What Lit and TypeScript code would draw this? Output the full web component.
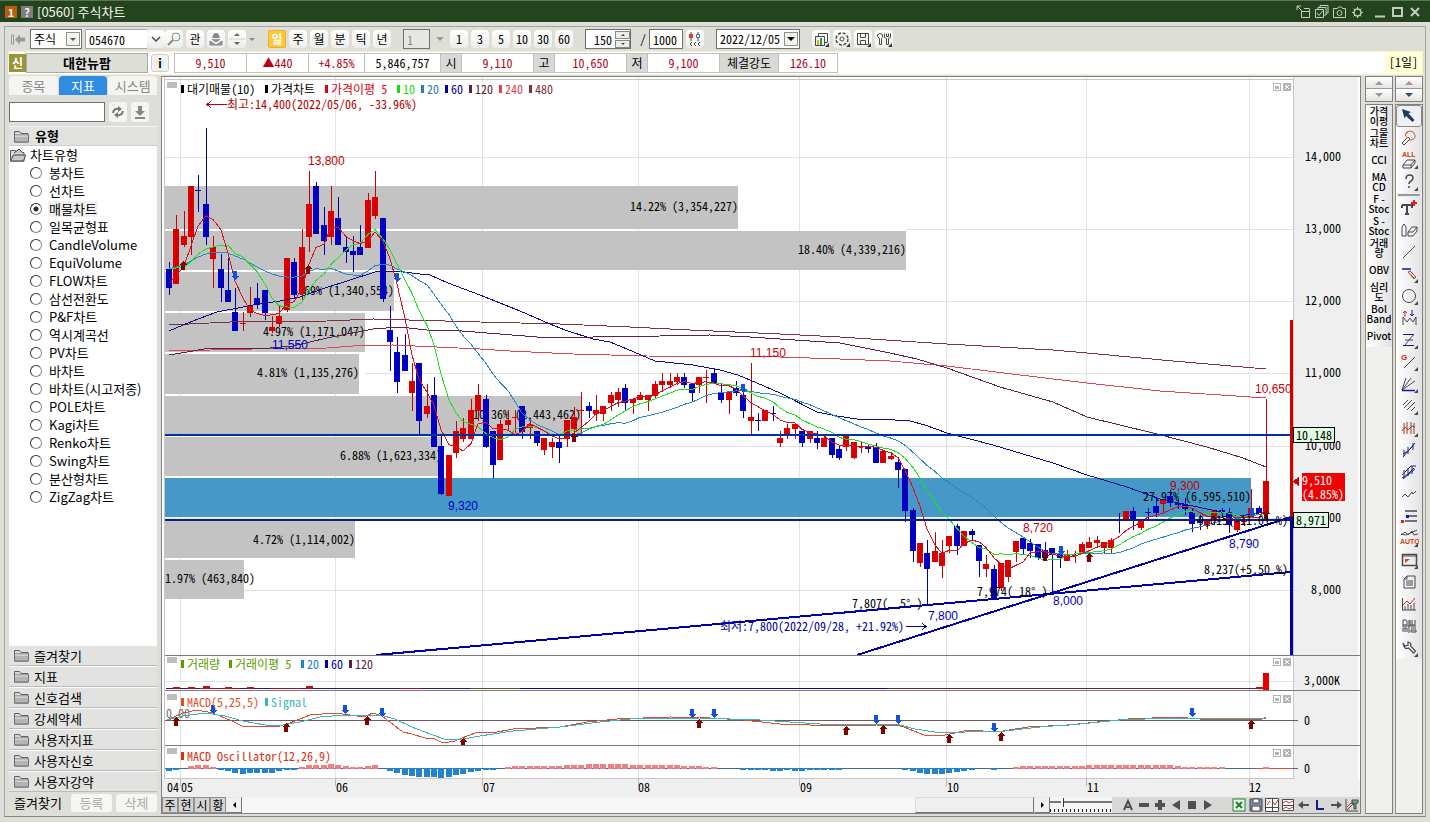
import { LitElement, html, svg, css } from "lit";
import { customElement, property } from "lit/decorators.js";
import { classMap } from "lit/directives/class-map.js";

type Pt = [number, number];

/* ---------- chart data ---------- */

// colour, body top, body bottom, wick top, wick bottom
const CANDLES: [string, number, number, number, number][] = (
  "b269,288,262,295 r229,284,215,284 r236,245,211,247 r186,237,186,255 b190,191,175,212 b204,237,128,245 r247,259,236,288 " +
  "b269,288,254,302 b290,302,258,302 b312,331,288,331 r323,324,312,331 r306,313,287,317 b298,305,283,309 b290,313,290,320 " +
  "r327,331,316,333 r316,324,306,327 r258,310,258,312 b262,295,258,298 r247,294,229,302 r204,237,171,252 b186,234,182,234 " +
  "b225,241,207,255 r211,237,186,245 b218,245,197,245 b247,252,236,263 b251,255,236,272 b247,255,225,255 r200,248,193,248 " +
  "r197,216,171,219 b218,299,218,302 b330,342,306,371 b352,382,337,393 b355,371,334,371 r381,393,363,411 b363,421,363,435 " +
  "r406,414,384,418 b395,447,377,447 b446,494,435,495 r455,496,455,496 r431,453,421,458 r428,439,418,442 r410,439,399,439 " +
  "r395,411,384,421 b399,447,395,448 b431,465,431,478 r424,460,420,460 r420,425,410,430 r417,418,410,433 b406,432,406,439 " +
  "r424,428,420,439 b431,443,431,446 r438,450,438,455 r442,447,438,458 b442,448,436,463 r420,439,420,447 r417,429,407,435 " +
  "r410,411,392,435 b406,411,402,418 r410,414,395,421 r406,414,406,421 r395,403,392,411 r392,400,388,407 b388,403,384,411 " +
  "r399,403,399,414 r395,400,392,400 r395,400,395,411 r384,396,381,399 r381,385,373,392 r381,385,373,388 r377,382,373,385 " +
  "b377,385,373,388 b384,393,384,402 r377,385,377,393 r377,378,370,403 b373,383,369,383 b392,400,384,403 r392,400,392,414 " +
  "b388,393,381,396 b395,411,392,418 r417,421,363,435 b420,421,413,431 r410,421,410,421 b413,414,406,421 r438,443,431,447 " +
  "r428,435,424,439 r424,429,423,439 b431,443,431,447 r431,439,431,443 b438,443,431,449 r438,447,436,447 b438,455,438,458 " +
  "b449,458,445,460 r436,447,436,451 r442,458,442,459 r446,447,442,453 b446,449,445,453 b447,463,443,463 r451,463,451,463 " +
  "r456,459,452,460 b462,470,457,488 b469,511,469,522 b510,551,508,562 r543,563,543,567 b553,569,540,605 r551,562,532,562 " +
  "r553,566,540,578 r536,546,536,553 b526,546,524,555 r531,546,531,546 b531,535,529,541 b545,561,545,577 r564,569,555,577 " +
  "b569,598,565,598 r563,588,563,591 r560,577,560,582 r541,552,541,562 b538,549,538,554 b543,551,539,558 b544,558,544,560 " +
  "b550,558,542,560 b548,555,548,592 b553,558,553,568 r555,561,550,561 r555,556,551,563 r544,554,542,554 r542,548,537,548 " +
  "r540,543,536,548 r542,548,542,553 r540,548,538,553 b519,520,513,533 r511,519,511,519 b511,519,507,530 r521,528,519,530 " +
  "b512,513,508,519 b506,513,498,517 r500,504,500,513 b496,503,490,507 b503,505,500,509 b504,509,498,515 b512,524,509,532 " +
  "b520,523,515,530 r520,526,520,529 r511,519,510,525 b510,512,508,518 b512,525,508,533 r521,530,521,532 r519,522,517,526 " +
  "r508,517,489,517 b508,513,506,513 r481,513,399,513"
)
  .split(" ")
  .map((s) => {
    const [a, b, c, d] = s.slice(1).split(",").map(Number);
    return [s[0], a, b, c, d];
  });

const cx = (i: number) => Math.round(169 + (i * 1097) / 149);
const closes = CANDLES.map((c) => (c[0] === "r" ? c[1] : c[2]));

function average(n: number, lead: number[]): Pt[] {
  return closes.map((_, i) => {
    if (i < n - 1) return [cx(i), lead[i]] as Pt;
    const part = closes.slice(i - n + 1, i + 1);
    return [cx(i), part.reduce((a, b) => a + b, 0) / n] as Pt;
  });
}

const MA5 = average(5, [283, 276, 266, 246]);
const MA10 = average(10, [269, 268, 267, 262, 254, 249, 247, 245, 245]);
const MA20 = average(20, [269, 267, 265, 261, 257, 254, 252, 252, 253, 256, 259, 263, 267, 271, 274, 276, 277, 277, 276]);

const parse = (s: string): Pt[] => s.split(" ").map((p) => p.split(",").map(Number) as Pt);
const MA60 = parse(
  "169,331 183,325 198,319 217,312 238,308 258,304 280,301 300,297 325,288 350,280 375,272 395,271 420,274 430,275 448,283 480,295 520,311 550,324 565,330 593,339 610,342 627,349 655,361 693,365 720,370 738,375 757,383 780,393 817,412 837,416 857,419 880,419 910,421 925,425 947,433 993,445 1053,463 1087,475 1127,487 1160,499 1193,506 1240,516 1266,512"
);
const MA120 = parse(
  "169,355 187,352 210,348 270,348 293,346 327,338 373,329 400,327 427,330 450,330 487,333 537,337 593,337 660,336 710,335 750,337 780,339 840,343 890,353 917,359 947,368 1000,387 1053,402 1087,417 1153,433 1207,447 1243,458 1266,467"
);
const MA240 = parse(
  "169,351 253,349 327,348 353,346 393,345 480,349 510,351 573,354 647,356 780,357 840,359 890,361 947,366 1053,379 1087,383 1160,391 1266,398"
);
const MA480 = parse(
  "169,325 230,322 327,321 373,319 480,322 560,324 630,327 690,330 780,334 840,337 947,344 1053,350 1087,353 1173,361 1266,369"
);
const MACD = parse(
  "167,720 183,713 197,710 213,713 232,721 242,726 265,726 280,726 290,723 300,719 310,715 335,713 350,715 363,717 373,713 382,716 395,726 403,732 412,734 425,738 433,738 443,743 455,741 467,736 478,732 492,733 513,729 560,727 587,722 617,719 670,717 710,718 743,720 780,724 840,726 877,725 897,725 904,727 924,735 945,735 969,730 997,732 1028,727 1069,725 1097,722 1128,719 1176,717 1200,719 1262,719 1266,718"
);
const SIGNAL = parse(
  "167,720 183,716 205,713 225,716 243,721 265,725 283,725 300,722 320,717 345,715 363,716 380,715 395,719 412,727 430,734 447,740 463,739 480,736 513,731 560,727 600,722 630,719 700,718 760,720 820,724 880,724 900,725 915,729 935,732 955,733 975,731 1005,731 1040,727 1080,724 1120,720 1170,718 1262,719 1266,717"
);

// signed height of each oscillator bar
const OSC: number[] = [
  -2, -1, 0, 2, 3, 3, 1, -1, -2, -4, -5, -4, -4, -4, -4, -2, -1, -1, 1, 3, 3, 3, 4, 3, 2, 1, 1, 2, 3, 0,
  -2, -4, -6, -7, -8, -8, -8, -9, -8, -6, -5, -3, -2, -1, -1, 0, 1, 2, 2, 2, 2, 2, 2, 2, 3, 3, 3, 4, 4, 4,
  4, 4, 4, 3, 3, 3, 3, 3, 3, 3, 2, 2, 2, 1, 1, 0, 0, 0, -1, -1, -1, -1, -2, -2, -1, -2, -2, -1, -1, -1,
  -1, -1, 0, 0, 0, 0, 0, 0, 0, 0, -1, -2, -4, -5, -5, -5, -4, -3, -2, -1, 0, 0, -1, 0, 0, 1, 2, 2, 2, 2,
  2, 2, 2, 2, 2, 3, 3, 3, 3, 3, 3, 3, 3, 3, 3, 3, 3, 2, 1, 1, 1, 1, 1, 1, 0, 0, 0, 0, 0, 1,
];

// top, bottom, right edge, label
const PROFILE: [number, number, number, string][] = [
  [186, 229, 738, "14.22% (3,354,227)"],
  [231, 270, 906, "18.40% (4,339,216)"],
  [272, 311, 394, "5.69% (1,340,554)"],
  [313, 352, 365, "4.97% (1,171,047)"],
  [354, 394, 359, "4.81% (1,135,276)"],
  [396, 435, 581, "10.36% (2,443,462)"],
  [437, 476, 442, "6.88% (1,623,334)"],
  [478, 517, 1251, "27.97% (6,595,510)"],
  [521, 558, 355, "4.72% (1,114,002)"],
  [560, 599, 244, "1.97% (463,840)"],
];

const GRID_X = [180, 335, 482, 638, 799, 946, 1086, 1249];
const GRID_Y = [157, 229, 301, 373, 446, 518, 590];
const RED = "#dc0000";
const BLUE = "#0000c8";

const line = (p: Pt[], color: string) =>
  svg`<polyline points=${p.map((q) => q.join(",")).join(" ")} fill="none" stroke=${color} stroke-width="1"></polyline>`;
const txt = (x: number, y: number, s: string, color = "#000", cls = "m", anchor = "start") =>
  svg`<text x=${x} y=${y + 5} class=${cls} fill=${color} text-anchor=${anchor} xml:space="preserve">${s}</text>`;
const up = (x: number, y: number) =>
  svg`<path d="M${x} ${y - 5}l4 4h-2v5h-4v-5h-2z" fill="#800000"></path>`;
const down = (x: number, y: number) =>
  svg`<path d="M${x} ${y + 5}l4 -4h-2v-5h-4v5h-2z" fill="#1450e0"></path>`;

const cells = (s: string) => [...s].reduce((a, c) => a + (c > "\u1000" ? 12 : 6), 0);
function legend(y: number, items: [string, string][]) {
  let x = 181;
  return items.map(([s, color]) => {
    const at = x;
    x += 12 + cells(s);
    return svg`<rect x=${at} y=${y - 4} width="3" height="8" fill=${color}></rect>${txt(at + 6, y, s, color)}`;
  });
}
const paneTools = (y: number) => svg`
  <rect x="167" y=${y - 5} width="10" height="6" fill="#bdbdbd"></rect>
  <rect x="1273.5" y=${y - 3.5} width="7" height="7" fill="#fff" stroke="#b4b4b4"></rect>
  <rect x="1275" y=${y - 1} width="4" height="3" fill="#b4b4b4"></rect>
  <rect x="1283" y=${y - 4} width="8" height="8" fill="#b4b4b4"></rect>
  <path d="M1285 ${y - 2}l4 4m0 -4l-4 4" stroke="#fff"></path>`;
const paneBase = (y0: number, y1: number) => svg`
  <rect x="162" y=${y0} width="1198" height=${y1 - y0} fill="#fff"></rect>
  <rect x="1293" y=${y0} width="65" height=${y1 - y0} fill="#efefef"></rect>
  ${GRID_X.map((x) => svg`<path d="M${x + 0.5} ${y0}V${y1}" stroke="#e2e2e2"></path>`)}
  <path d="M164.5 ${y0}V${y1}M1293.5 ${y0}V${y1}" stroke="#c6c6c6"></path>`;
const paneEdge = (y: number) => svg`<path d="M165 ${y + 0.5}H1360" stroke="#7a7a7a"></path>`;

@customElement("stock-chart")
class StockChart extends LitElement {
  static styles = css`
    :host { display: block; }
    svg { display: block; width: 100%; shape-rendering: crispEdges; }
    svg.months { overflow: visible; }
    .m { font: 12px "Noto Sans Mono CJK KR", "Noto Sans CJK KR", "Liberation Mono", monospace; white-space: pre; }
    .p { font: 12px "Liberation Sans", sans-serif; }
  `;

  render() {
    return html`${this.price()}${this.volume()}${this.macd()}${this.oscillator()}${this.months()}`;
  }

  price() {
    return html`<svg viewBox="162 77 1198 578" role="img" aria-label="가격차트">
      ${paneBase(77, 655)}
      <path d="M165 79.5H1293" stroke="#c6c6c6"></path>
      ${PROFILE.map(
        ([a, b, x], i) => svg`<rect x="165" y=${a} width=${x - 165} height=${b - a} fill=${i === 7 ? "#4698c6" : "#c3c3c3"}></rect>`
      )}
      <path d="M165 518.5H1251" stroke="#d4f0f4"></path>
      ${GRID_Y.map((y, i) =>
        i === 0 || i === 3 || i === 6
          ? svg`<path d="M${i === 3 ? 365 : i === 6 ? 244 : 165} ${y + 0.5}H1298" stroke="#e0e0e0"></path>`
          : svg`<path d="M${[0, 906, 394, 0, 442, 1251][i]} ${y + 0.5}H1298" stroke="#e0e0e0"></path>`
      )}
      ${PROFILE.map(([a, , x, s]) => txt(x < 260 ? 165 : x, a < 190 ? 206 : a + 18, s, "#000", "m", x < 260 ? "start" : "end"))}
      ${CANDLES.map(([c, a, b, h, l], i) => {
        const color = c === "r" ? RED : BLUE;
        return svg`<rect x=${cx(i) - 3} y=${a} width="6" height=${b - a} fill=${color}></rect>
          <rect x=${cx(i)} y=${h} width="1" height=${l - h} fill=${c === "r" ? "#c80000" : "#0000a0"}></rect>`;
      })}
      ${line(MA480, "#80303c")}${line(MA240, "#dc4656")}${line(MA120, "#602048")}${line(MA60, "#0a0a96")}
      ${line(MA20, "#2a86c4")}${line(MA10, "#1ee01e")}${line(MA5, "#dc1020")}
      <path d="M165 435H1291" stroke="#0030a8" stroke-width="2"></path>
      <path d="M165 520H1291" stroke="#101c88" stroke-width="2"></path>
      <path d="M376 655L1291 572M857 655L1291 517" stroke="#0000a8" stroke-width="2"></path>
      <rect x="1290" y="320" width="3" height="198" fill="#d00000"></rect>
      <rect x="1290" y="517" width="3" height="138" fill="#0000a8"></rect>
      ${[[183, 266], [308, 270], [574, 438], [1045, 557], [1089, 558], [1266, 515]].map(([x, y]) => up(x, y))}
      ${[[235, 275], [397, 277], [743, 388], [1061, 550], [1252, 512]].map(([x, y]) => down(x, y))}
      ${txt(308, 160, "13,800", "#c80000", "p")}${txt(272, 344, "11,550", "#0000c8", "p")}
      ${txt(448, 505, "9,320", "#0000c8", "p")}${txt(750, 352, "11,150", "#c80000", "p")}
      ${txt(1023, 527, "8,720", "#c80000", "p")}${txt(1170, 485, "9,300", "#c80000", "p")}
      ${txt(928, 615, "7,800", "#0000c8", "p")}${txt(1053, 600, "8,000", "#0000c8", "p")}
      ${txt(1229, 543, "8,790", "#0000c8", "p")}${txt(1255, 388, "10,650", "#c80000", "p")}
      ${txt(852, 603, "7,807(  5° )")}${txt(977, 591, "7,974( 18° )")}
      ${txt(1204, 569, "8,237(+5.50 %)")}${txt(1198, 520, "9,015(-11.01 %)")}
      <path d="M207 104.5H227M211 101l-4 3.5l4 3.5" stroke="#b40000" fill="none"></path>
      ${txt(227, 104, "최고:14,400(2022/05/06, -33.96%)", "#b40000")}
      ${txt(720, 626, "최저:7,800(2022/09/28, +21.92%)", "#0000a0")}
      <path d="M906 626.5H926M922 623l4 3.5l-4 3.5" stroke="#0000a0" fill="none"></path>
      ${legend(89, [
        ["대기매물(10)", "#000"],
        ["가격차트", "#000"],
        ["가격이평 5", "#dc0010"],
        ["10", "#14dc14"],
        ["20", "#2080c0"],
        ["60", "#0000a0"],
        ["120", "#602040"],
        ["240", "#e04050"],
        ["480", "#803038"],
      ])}
      ${paneTools(87)}
      ${["14,000", "13,000", "12,000", "11,000", "10,000", "9,000", "8,000"].map((s, i) =>
        txt(1341, GRID_Y[i] - 1, s, "#000", "m", "end")
      )}
      <rect x="1293.5" y="427.5" width="41" height="15" fill="#e1ffe1" stroke="#000"></rect>
      ${txt(1296, 435, "10,148")}
      <rect x="1293.5" y="512.5" width="35" height="15" fill="#e1ffe1" stroke="#000"></rect>
      ${txt(1296, 520, "8,971")}
      <rect x="1302" y="473" width="43" height="28" fill="#f00000"></rect>
      <path d="M1293 481.5l6 -5v10z" fill="#c80000"></path>
      ${txt(1302, 480, "9,510", "#fff")}${txt(1302, 494, "(4.85%)", "#fff")}
    </svg>`;
  }

  volume() {
    const small: Record<number, number> = { 1: 1, 3: 1, 5: 2, 8: 1, 11: 1, 19: 2, 148: 1 };
    return html`<svg viewBox="162 655 1198 36" role="img" aria-label="거래량">
      ${paneBase(655, 691)}${paneEdge(655)}${paneEdge(690)}
      <path d="M165 681.5H1298" stroke="#e2e2e2"></path>
      <path d="M166 688.5H470" stroke="#2a1478" stroke-width="1"></path>
      <path d="M200 688.5H240M270 688.5H300M400 688.5H420" stroke="#a01030"></path>
      <path d="M470 688.5H520" stroke="#605020"></path>
      <path d="M520 688.5H887" stroke="#200080"></path>
      <path d="M887 688.5H1262" stroke="#502848"></path>
      ${Object.entries(small).map(([i, h]) => svg`<rect x=${cx(+i) - 3} y=${688 - h} width="7" height=${h + 1} fill="#c01010"></rect>`)}
      <rect x="1263" y="673" width="6" height="17" fill="#e60000"></rect>
      ${legend(664, [
        ["거래량", "#5a9a00"],
        ["거래이평 5", "#5a9a00"],
        ["20", "#2080d0"],
        ["60", "#0000a0"],
        ["120", "#602040"],
      ])}
      ${paneTools(662)}${txt(1304, 680, "3,000K")}
    </svg>`;
  }

  macd() {
    return html`<svg viewBox="162 691 1198 54" role="img" aria-label="MACD">
      ${paneBase(691, 745)}
      ${txt(166, 713, "0.00", "#707070")}
      <path d="M165 720.5H1298" stroke="#705860"></path>
      ${line(MACD, "#dc5030")}${line(SIGNAL, "#3cb4bc")}
      ${[[213, 709], [345, 709], [382, 712], [692, 713], [714, 713], [876, 719], [898, 719], [994, 727], [1192, 712]].map(([x, y]) => down(x, y))}
      ${[[176, 722], [286, 728], [367, 721], [463, 743], [699, 724], [846, 731], [883, 730], [949, 739], [1001, 737], [1251, 725]].map(([x, y]) => up(x, y))}
      ${legend(702, [
        ["MACD(5,25,5)", "#e05028"],
        ["Signal", "#3cb4bc"],
      ])}
      ${paneTools(699)}${txt(1304, 720, "0")}
    </svg>`;
  }

  oscillator() {
    return html`<svg viewBox="162 745 1198 34" role="img" aria-label="MACD Oscillator">
      ${paneBase(745, 779)}${paneEdge(745)}
      <path d="M165 768.5H1298" stroke="#3c6c9c"></path>
      <path d="M1256 768.5H1293" stroke="#e05030"></path>
      ${OSC.map((h, i) =>
        h
          ? svg`<rect x=${cx(i) - 3} y=${h > 0 ? 768 - h : 768} width="6" height=${Math.abs(h) + 1} fill=${h > 0 ? "#f08080" : "#2382cd"}></rect>`
          : null
      )}
      ${legend(756, [["MACD Oscillator(12,26,9)", "#d83010"]])}
      ${paneTools(753)}${txt(1304, 768, "0")}
      <path d="M165 778.5H1293" stroke="#c6c6c6"></path>
    </svg>`;
  }

  months() {
    const labels: [number, string][] = [
      [167, "04"], [181, "05"], [336, "06"], [483, "07"], [638, "08"], [800, "09"], [947, "10"], [1087, "11"], [1249, "12"],
    ];
    return html`<svg class="months" viewBox="162 779 1198 18" role="img" aria-label="월">
      <rect x="162" y="779" width="1196" height="18" fill="#efefef"></rect>
      ${GRID_X.map((x) => svg`<path d="M${x + 0.5} 779V786" stroke="#b8b8b8"></path>`)}
      ${labels.map(([x, s]) => txt(x, 787, s))}
    </svg>`;
  }
}

/* ---------- icons ---------- */

const K = "#484848";
const svgIcon = (body: unknown, w = 20, h = 20) =>
  html`<svg width=${w} height=${h} viewBox="0 0 ${w} ${h}" fill="none" stroke=${K} stroke-width="1" aria-hidden="true">${body}</svg>`;
const corner = svg`<path d="M19 15v4h-4z" fill=${K} stroke="none"></path>`;

const DRAW_TOOLS: [string, unknown, boolean][] = [
  ["선택", svg`<path d="M3 3l9 3-2.500 1.500 6 6.500-2 2-6.500-6-1.500 2.500z" fill="#1c3c60" stroke="none"></path>`, false],
  ["되돌리기", svg`<path d="M3 15l6-6 2 2-6 6z"></path><path d="M9 4l-3 3 3 3M6 7q1-4 5-4t5 4-4 5h-2" stroke="#d86030"></path>`, false],
  ["전체 지우기", svg`<text x="3" y="7" font-size="7" font-weight="bold" font-family="Liberation Sans" fill="#d03c10" stroke="none">ALL</text><path d="M4 15l4-5h8l-4 5zM4 15v3h8l4-5v-3M12 15v3"></path>`, true],
  ["도움말", svg`<path d="M7 7q0-4 3.500-4t3.500 3q0 2-2 3t-2 3M10 14v2" stroke-width="1.500"></path>`, true],
  ["문자", svg`<path d="M3 7h10v3M8 7v9M6 16h4M3 7v3" stroke-width="2"></path><path d="M15 2v6M12 5h6" stroke="#e02020" stroke-width="2"></path>`, false],
  ["지우개", svg`<path d="M3 7v9h4V7l-2-3zM9 12l4-5h5l-4 5zM9 12v4h5l4-5V7"></path>`, false],
  ["추세선", svg`<path d="M4 16L16 4"></path>`, false],
  ["수평선", svg`<path d="M3 5h9" stroke="#1010b0" stroke-width="1.500"></path><path d="M9 8l2-1 6 6-2 2z" stroke="#c83030"></path><path d="M12 11l4 4" stroke="#208040"></path>`, true],
  ["원", svg`<circle cx="10" cy="10" r="6.500"></circle>`, true],
  ["파동", svg`<path d="M4 17V9l4 5 3-4 3 4 3-5v8"></path><path d="M6 9V3M4 5l2-2 2 2" stroke="#e02020"></path><path d="M13 2v6M11 6l2 2 2-2" stroke="#1010c0"></path>`, false],
  ["Z형", svg`<path d="M15 4L6 15M6 10h8"></path><path d="M4 4.500h11M4 15.500h11" stroke="#1010b0"></path>`, true],
  ["각도선", svg`<text x="2" y="8" font-size="8" font-weight="bold" font-family="Liberation Sans" fill="#d02000" stroke="none">G</text><path d="M5 16L16 5"></path>`, true],
  ["팬", svg`<path d="M3 16L7 4M3 16L12 4M3 16L16 7"></path><path d="M3 16.500h13" stroke="#1010c0" stroke-width="1.500"></path>`, true],
  ["평행선", svg`<path d="M4 9l5-5M5 12l8-8M8 14l8-8M12 15l4-4"></path>`, true],
  ["시간대", svg`<path d="M5 5v11M8 4v12M12 4v12M15 5v11M3 13l3-4 3 3 4-4 3 1" stroke="#984020"></path>`, true],
  ["파동 1", svg`<path d="M4 17L16 3M5 10v6M9 7v7M14 3v7M4 14l5-3 5-5" stroke="#202090"></path>`, false],
  ["파동 2", svg`<path d="M3 13L12 4h5M4 17L16 7M5 8v8M9 6v8M13 4v8M3 16l6-4 6-6" stroke="#202090"></path>`, false],
  ["지그재그", svg`<path d="M3 13l3-3 3 3 4-5 1 2 3-3"></path>`, false],
  ["수준선", svg`<path d="M6 5h12M9 10h9M6 15h12" stroke-width="1.500"></path><rect x="7" y="9" width="3" height="3" fill="#1010c0" stroke="none"></rect><rect x="2" y="14" width="3" height="3" fill="#e02010" stroke="none"></rect>`, false],
  ["자동 추세", svg`<path d="M2 6l5 1 11-5M2 7l4-3 3 3 4-4 2 4 4-1"></path><text x="1" y="16" font-size="7" font-weight="bold" font-family="Liberation Sans" fill="#d84010" stroke="none">AUTO</text>`, true],
  ["창", svg`<path d="M3.500 4.500h14v11h-14z" stroke-width="1.500"></path><path d="M3 6h14"></path><path d="M6 9h5l-5 4z" fill="#d84010" stroke="none"></path>`, true],
  ["문서", svg`<path d="M8 4h8v12H5V7zM8 4v3H5M7 9h7M7 11h7M7 13h7"></path>`, false],
  ["차트", svg`<path d="M3.500 4v12M3 16h14M6 12v4M9 10v6M12 11v5M15 9v7"></path><path d="M4 11l4-4 3 3 5-6" stroke="#e02020"></path>`, false],
  ["일주월", svg`<path d="M4 4v5h4V5L7 4zM11 4v5h5V4M13 4v5M3 10h14M10 4v13M4 16v-4h4v4M6 12v4M12 12h5M12 14h5v2h-5z"></path>`, false],
  ["설정", svg`<path d="M4 5l2 3 3-1v-3q4 1 2.500 4l5 5-2 2-5-5Q5 12 4 5z" stroke-width="1.200"></path>`, true],
];

const folder = (open = false) => html`<svg width="17" height="15" viewBox="0 0 17 15" aria-hidden="true">
  <path d="M1.500 13V2.500h5l1.500 2h7V13z" fill="#d8d8d8" stroke="#606060"></path>
  ${open
    ? svg`<path d="M1.500 13l3-6h12l-2 6zM5 5l5-4 4 4" fill="#c8c8c8" stroke="#404040"></path>`
    : svg`<path d="M1.500 13V6h14v7z" fill="#b4b4b4" stroke="#707070"></path><path d="M2 7h13" stroke="#eee"></path>`}
</svg>`;
const tri = (dir: "up" | "down" | "left" | "right", color = "#606060", s = 4) => {
  const d = {
    up: `M0 ${s}l${s} -${s}l${s} ${s}z`,
    down: `M0 0h${2 * s}l-${s} ${s}z`,
    left: `M${s} 0v${2 * s}l-${s} -${s}z`,
    right: `M0 0v${2 * s}l${s} -${s}z`,
  }[dir];
  const flat = dir === "up" || dir === "down";
  return html`<svg width=${flat ? 2 * s : s} height=${flat ? s : 2 * s} aria-hidden="true"><path d=${d} fill=${color}></path></svg>`;
};

const CHART_TYPES = [
  "봉차트", "선차트", "매물차트", "일목균형표", "CandleVolume", "EquiVolume", "FLOW차트", "삼선전환도", "P&F차트", "역시계곡선",
  "PV차트", "바차트", "바차트(시고저종)", "POLE차트", "Kagi차트", "Renko차트", "Swing차트", "분산형차트", "ZigZag차트",
];
const QUICK = ["가격\n이평", "그물\n차트", "CCI", "MA\nCD", "F -\nStoc", "S -\nStoc", "거래\n량", "OBV", "심리\n도", "Bol\nBand", "Pivot"];
const QUOTE: [string, string][] = [
  ["9,510", "r w72"], ["▲440", "r w62"], ["+4.85%", "r w56"], ["5,846,757", "w76"],
  ["시", "h w22"], ["9,110", "r w72"], ["고", "h w22"], ["10,650", "r w72"],
  ["저", "h w22"], ["9,100", "r w72"], ["체결강도", "h w60"], ["126.10", "r w60"],
];

@customElement("app-root")
class AppRoot extends LitElement {
  @property() picked = "매물차트";

  static styles = css`
    :host { display: block; font: 12px/16px "Noto Sans CJK KR", sans-serif; color: #000; }
    * { box-sizing: border-box; }
    button, input, select { font: inherit; color: inherit; margin: 0; padding: 0; border: 0; border-radius: 0; background: none; }
    button { display: flex; align-items: center; justify-content: center; }
    svg { flex: none; }
    .window { display: flex; flex-direction: column; min-height: 100vh; background: #deded9; }
    .title { display: flex; align-items: center; gap: 4px; height: 22px; padding: 0 8px 0 5px; background: #24441e; border-top: 1px solid #5c7458; color: #f4f4f0; font-size: 13px; }
    .title h1 { font-size: 13px; font-weight: 400; margin: 0; flex: 1; }
    .badge { width: 12px; height: 12px; line-height: 12px; text-align: center; font-size: 11px; font-weight: 700; background: #b85c10; }
    .badge.help { background: #807c80; }
    .title svg { display: block; }
    .frame { flex: 1; display: flex; flex-direction: column; margin: 4px 4px 5px 4px; border: 1px solid #a4a4a0; border-bottom-color: #888; }
    .toolbar, .quote, .scroll { font-family: "Noto Sans Mono CJK KR", "Noto Sans CJK KR", "Liberation Mono", monospace; }

    .toolbar { display: flex; align-items: center; gap: 3px; height: 24px; padding-left: 4px; }
    .toolbar button { height: 18px; width: 18px; background: linear-gradient(#fff, #ededea); border-radius: 4px; }
    .toolbar button.on { background: #ffc83c; color: #fff; border: 1px solid #f0b020; border-radius: 2px; font-weight: 700; }
    .toolbar button.flat { background: none; width: 18px; }
    .toolbar .far { margin-left: 9px; }
    .box { display: flex; align-items: center; height: 20px; background: #fff; border: 1px solid #707070; position: relative; }
    .box input, .box select { appearance: none; width: 100%; height: 100%; padding-left: 3px; outline: none; background: transparent; }
    .box .arrow { position: absolute; right: 1px; top: 2px; width: 14px; height: 14px; display: grid; place-items: center; pointer-events: none; background: #f2f2ee; border: 1px solid #909090; }
    .w-kind { width: 52px; } .w-code { width: 62px; border-color: #aaa; border-right: 0; } .w-n { width: 27px; background: #e6e6e2; color: #888; }
    .w-cnt { width: 46px; } .w-max { width: 34px; } .w-date { width: 84px; }
    .w-cnt input { padding-left: 8px; }
    .pair { display: flex; align-items: center; }
    .spin { display: grid; gap: 1px; }
    .toolbar .spin button { width: 15px; height: 8px; background: #ecece8; border: 1px solid #888; border-radius: 0; }
    .periods { display: flex; gap: 3px; margin-left: 10px; }
    .icons { display: flex; gap: 3px; margin-left: 9px; }

    .quote { display: flex; align-items: center; height: 24px; margin: 0 2px 0 3px; background: #fff; border: 1px solid #f4f4c8; }
    .quote .mark { width: 17px; height: 18px; line-height: 17px; text-align: center; font-weight: 700; background: #989438; color: #fff; }
    .quote .name { width: 122px; height: 20px; background: #deded9; border: 1px solid #aaa; font-weight: 700; font-size: 13px; }
    .quote .info { width: 18px; height: 18px; margin: 0 5px 0 3px; background: #f2f2f0; border: 1px solid #ccc; border-radius: 3px; font-weight: 700; }
    .quote table { border-collapse: collapse; table-layout: fixed; }
    .quote td { height: 19px; padding: 0; border: 1px solid #c0c0c0; text-align: center; background: #fff; line-height: 16px; }
    .quote td.r { color: #b40018; } .quote td.h { background: #d8d8d6; }
    .w72 { width: 72px; } .w62 { width: 62px; } .w56 { width: 56px; } .w76 { width: 76px; } .w22 { width: 21px; } .w60 { width: 59px; }
    .quote .unit { margin-left: auto; height: 22px; line-height: 20px; padding: 0 4px; background: #ffffd8; }

    .main { flex: 1; display: flex; padding: 1px 2px 2px 4px; gap: 4px; }
    .side { width: 148px; display: flex; flex-direction: column; font-size: 13px; }
    .tabs { display: flex; gap: 1px; height: 19px; }
    .tabs button { flex: 1; background: #f4f4f2; color: #888; border-radius: 4px 4px 0 0; }
    .tabs button.on { background: #308ce0; color: #fff; }
    .search { display: flex; gap: 4px; margin-top: 7px; height: 20px; }
    .search input { width: 96px; background: #fff; border: 1px solid #707070; }
    .search button { width: 18px; background: #f4f4f2; border-radius: 3px; }
    .head { display: flex; align-items: center; gap: 5px; height: 20px; margin-top: 4px; padding-left: 4px; background: #e2e2e0; border-bottom: 1px solid #ccc; border-top: 1px solid #f4f4f4; font-weight: 700; }
    .tree { flex: 1; background: #fff; margin: 0; padding: 0; border: 0; }
    .root { display: flex; align-items: center; gap: 4px; height: 18px; }
    .tree label { display: flex; align-items: center; height: 18px; padding-left: 21px; gap: 6px; white-space: nowrap; }
    .tree label span { padding: 0 1px; line-height: 16px; }
    .tree label.on span { background: #f0f0f0; }
    .tree input { appearance: none; width: 12px; height: 12px; border: 1px solid #303030; border-right-color: #888; border-bottom-color: #888; border-radius: 50%; background: #fff; }
    .tree input:checked { background: radial-gradient(#183040 0 2px, #fff 3px); }
    .fold { justify-content: flex-start; gap: 4px; height: 21px; padding-left: 4px; background: #e2e2e0; border-top: 1px solid #fbfbfb; border-bottom: 1px solid #bbb; }
    .foot { display: flex; align-items: center; gap: 4px; height: 22px; padding-left: 5px; }
    .foot span { flex: 1; white-space: nowrap; }
    .foot button { width: 41px; height: 18px; background: #f6f6f4; color: #aaa; border-radius: 3px; }

    .center { flex: 1; min-width: 0; display: flex; flex-direction: column; border: 1px solid #808088; background: #f4f4f4; }
    .scroll { display: flex; height: 16px; align-items: stretch; background: #f6f6f6; }
    .scroll .cat { width: 16px; background: #d4d4d2; border: 1px solid #909090; }
    .scroll .step { width: 16px; background: #f0f0ee; border: 1px solid #e8e8e8; border-right-color: #777; border-bottom-color: #777; }
    .track { flex: 1; display: flex; justify-content: flex-end; }
    .thumb { width: 119px; background: #efefed; border: 1px solid #ddd; border-right-color: #777; border-bottom-color: #777; }
    .zoom { appearance: none; width: 62px; background: linear-gradient(#777, #777) 0 4px / 100% 2px no-repeat, repeating-linear-gradient(90deg, #222 0 1px, transparent 1px 4px) 0 12px / 100% 3px no-repeat; }
    .zoom::-webkit-slider-thumb { appearance: none; width: 3px; height: 9px; margin-bottom: 5px; background: #fff; border-right: 1px solid #333; }
    .strip { display: flex; width: 248px; background: #d8d8d6; align-items: center; justify-content: space-between; padding-left: 8px; }
    .strip button { width: 16px; height: 16px; }
    .strip .gap { width: 15px; }

    .rail { width: 28px; display: flex; flex-direction: column; gap: 2px; }
    .rail + .rail { margin-left: -2px; }
    .updown { border: 1px solid #808080; background: #fff; }
    .updown button { width: 100%; height: 12px; background: linear-gradient(#fff, #e4e4e2); border-bottom: 1px solid #999; }
    .updown button + button { border: 0; }
    .list { flex: 1; border: 1px solid #808080; border-left-color: #a08c84; background: #f0f0ef; }
    .list button { width: 100%; height: 22px; background: linear-gradient(90deg, #fff, #e2e2e4); }
    .quick { font-size: 10px; line-height: 10px; font-weight: 500; white-space: pre; }
    .list button.on { border: 1px solid #888; border-radius: 3px; background: #eef0f4; }
    .list hr { height: 2px; margin: 1px 2px; border: 0; background: #999; }
  `;

  render() {
    return html`<div class="window">${this.titleBar()}
      <div class="frame">${this.toolBar()}${this.quoteBar()}
        <div class="main">${this.sidebar()}
          <section class="center"><stock-chart></stock-chart>${this.scrollBar()}</section>
          <nav class="rail">
            <div class="updown"><button aria-label="위로">${tri("up", "#999")}</button><button aria-label="아래로">${tri("down", "#999")}</button></div>
            <div class="list">${QUICK.map((q) => html`<button class="quick">${q}</button>`)}</div>
          </nav>
          <nav class="rail">
            <div class="updown"><button aria-label="위로">${tri("up", "#999")}</button><button aria-label="아래로">${tri("down", "#305070")}</button></div>
            <div class="list">${DRAW_TOOLS.map(
              ([name, body, more], i) => html`<button class=${classMap({ on: i === 0 })} aria-label=${name}>${svgIcon(svg`${body}${more ? corner : null}`)}</button>${i === 3 ? html`<hr />` : null}`
            )}</div>
          </nav>
        </div>
      </div>
    </div>`;
  }

  titleBar() {
    return html`<header class="title">
      <span class="badge">1</span><span class="badge help">?</span><h1>[0560] 주식차트</h1>
      <svg width="126" height="16" viewBox="0 0 126 16" fill="none" stroke="#c4ccc0" aria-hidden="true">
        <path d="M1 2l5 5M1 2h4M1 2v4M8 4.500h5M5.500 8v5.500h8v-9M5 7.500h8"></path>
        <path d="M19.500 5.500h8v8h-8zM22 5V3.500h8V11H28M24 4V1.500h8V9H30M21 9l2 2.500 4-5"></path>
        <path d="M37.500 4.500h4l1-1.500h3l1 1.500h3v9h-12z"></path><circle cx="43.500" cy="9" r="2.500"></circle>
        <circle cx="61.500" cy="8.500" r="3.500" stroke-width="1.500"></circle><path d="M61.500 3v2M61.500 12v2M56 8.500h2M65 8.500h2M57.500 4.500l1.500 1.500M64 11l1.500 1.500M65.500 4.500L64 6M59 11l-1.500 1.500"></path>
        <path d="M79 12.500h10" stroke-width="2"></path><path d="M97 4h9v8h-9z" stroke-width="2"></path><path d="M115 4l8 8M123 4l-8 8" stroke-width="2"></path>
      </svg>
    </header>`;
  }

  toolBar() {
    return html`<div class="toolbar">
      <button class="flat" aria-label="처음으로">${svgIcon(svg`<path d="M2.500 5v9h2V5z" stroke="#999"></path><path d="M6 9.500l5-5v3h5v4h-5v3z" fill="#999" stroke="none"></path>`, 18, 18)}</button>
      <span class="box w-kind"><select aria-label="종류"><option>주식</option></select><span class="arrow">${tri("down", "#555", 3)}</span></span>
      <span class="pair"><span class="box w-code"><input aria-label="종목코드" value="054670" /></span>
        <button aria-label="목록">${svgIcon(svg`<path d="M4 6l4 4 4-4" stroke-width="1.500"></path>`, 16, 16)}</button>
        <button aria-label="검색">${svgIcon(svg`<circle cx="10" cy="6" r="4" stroke="#888"></circle><path d="M7 9l-5 5" stroke="#888" stroke-width="2"></path>`, 16, 16)}</button></span>
      <button>관</button>
      <button aria-label="관심종목">${svgIcon(svg`<path d="M5 5a3 3 0 0 1 6 0l1 2H4z" fill="#888" stroke="none"></path><path d="M4 8q4 5 8 0M2 10l6 4 6-4v4H2z" fill="#999" stroke="#888"></path>`, 16, 16)}</button>
      <button aria-label="이전 다음">${svgIcon(svg`<path d="M8 2l3 3H5zM8 14l3-3H5z" fill="#666" stroke="none"></path><path d="M0 8h16" stroke="#ccc"></path>`, 16, 16)}</button>
      <span class="pair">${tri("down", "#888", 3)}</span>
      <span class="periods">${["일", "주", "월", "분", "틱", "년"].map((p, i) => html`<button class=${classMap({ on: i === 0 })}>${p}</button>`)}</span>
      <span class="box w-n far"><input aria-label="단위" value="1" /></span>
      <span class="pair">${svgIcon(svg`<path d="M3 6h8l-4 4z" fill="#999" stroke="none"></path>`, 14, 16)}</span>
      ${["1", "3", "5", "10", "30", "60"].map((p) => html`<button>${p}</button>`)}
      <span class="box w-cnt far"><input aria-label="봉 개수" value="150" /><span class="spin"><button aria-label="증가">${tri("up", "#444", 2)}</button><button aria-label="감소">${tri("down", "#444", 2)}</button></span></span>
      <span>&nbsp;/</span>
      <span class="box w-max"><input aria-label="최대 개수" value="1000" /></span>
      <button aria-label="봉 확대">${svgIcon(svg`<path d="M4 1v9M11 1v9"></path><path d="M2 3h4v4H2z" fill="#e04030" stroke="none"></path><path d="M9.500 3.500h3v3h-3z" fill="#fff" stroke="#3070c0"></path><path d="M5 11l-2 2 2 2M9 11l-2 2 2 2M13 11l-2 2 2 2"></path>`, 16, 16)}</button>
      <span class="box w-date far"><select aria-label="날짜"><option>2022/12/05</option></select><span class="arrow">${tri("down", "#000", 4)}</span></span>
      <span class="icons">
        <button aria-label="차트 복사">${svgIcon(svg`<path d="M2.500 5.500h9v9h-9zM5.500 5V2.500h9v9H12"></path><path d="M5 9v5" stroke="#e0b020" stroke-width="2"></path><path d="M8 7v7" stroke="#20a040" stroke-width="2"></path><path d="M16 12v4h-4z" fill="#333" stroke="none"></path>`, 16, 16)}</button>
        <button aria-label="환경설정">${svgIcon(svg`<circle cx="8" cy="8" r="6" stroke-dasharray="3 1.700" stroke-width="1.500"></circle><circle cx="8" cy="8" r="2"></circle><path d="M16 12v4h-4z" fill="#333" stroke="none"></path>`, 16, 16)}</button>
        <button aria-label="저장">${svgIcon(svg`<path d="M2.500 2.500h11v11h-11zM5.500 2.500v4h5v-4M5.500 13.500v-4h5v4"></path><path d="M16 12v4h-4z" fill="#333" stroke="none"></path>`, 16, 16)}</button>
        <button aria-label="도구">${svgIcon(svg`<path d="M1.500 3.500q2-2 5 0v3l-1 1v6h-2v-6l-2-2zM8.500 2.500v4l2 1v6h2v-6l2-1v-4M10.500 2.500v3h2v-3"></path><path d="M16 12v4h-4z" fill="#333" stroke="none"></path>`, 16, 16)}</button>
      </span>
    </div>`;
  }

  quoteBar() {
    return html`<div class="quote"><span class="mark">신</span><button class="name">대한뉴팜</button><button class="info">i</button>
      <table><tr>${QUOTE.map(([s, c]) => html`<td class=${c}>${s}</td>`)}</tr></table>
      <span class="unit">[1일]</span></div>`;
  }

  sidebar() {
    return html`<aside class="side">
      <div class="tabs"><button>종목</button><button class="on">지표</button><button>시스템</button></div>
      <div class="search"><input aria-label="지표 검색" />
        <button aria-label="새로고침">${svgIcon(svg`<path d="M3 9q1-5 6-4M13 7q-1 5-6 4" stroke="#777" stroke-width="2"></path><path d="M8 2l4 3-4 3zM8 8l-4 3 4 3z" fill="#777" stroke="none"></path>`, 16, 16)}</button>
        <button aria-label="내려받기">${svgIcon(svg`<path d="M6 2h4v5h3l-5 5-5-5h3zM3 13h10v2H3z" fill="#888" stroke="none"></path>`, 16, 16)}</button></div>
      <div class="head">${folder()}유형</div>
      <fieldset class="tree">
        <div class="root">${folder(true)}차트유형</div>
        ${CHART_TYPES.map((t) => html`<label class=${classMap({ on: t === this.picked })}>
          <input type="radio" name="kind" .checked=${t === this.picked} @change=${() => (this.picked = t)} /><span>${t}</span></label>`)}
      </fieldset>
      ${["즐겨찾기", "지표", "신호검색", "강세약세", "사용자지표", "사용자신호", "사용자강약"].map((s) => html`<button class="fold">${folder()}${s}</button>`)}
      <div class="foot"><span>즐겨찾기</span><button>등록</button><button>삭제</button></div>
    </aside>`;
  }

  scrollBar() {
    const g = "#505050";
    const f = (d: string, color = g) => svg`<path d=${d} fill=${color} stroke="none"></path>`;
    const left: [string, unknown][] = [
      ["글자", svg`<path d="M4 13l4-9 4 9M5 10h6" stroke=${g} stroke-width="2"></path>`],
      ["축소", f("M3 6h10v4H3z")],
      ["확대", f("M6 3h4v3h3v4h-3v3H6v-3H3V6h3z")],
      ["이전", f("M12 3v10L4 8z")],
      ["정지", f("M4 4h8v8H4z")],
      ["재생", f("M4 3v10l8-5z")],
    ];
    const right: [string, unknown][] = [
      ["엑셀", svg`<rect x="2" y="2" width="12" height="12" fill="#e8f8e8" stroke="#208030"></rect><path d="M5 5l6 6M11 5l-6 6" stroke="#208030" stroke-width="2"></path>`],
      ["저장", svg`<path d="M2 2h12v12H2z" fill="#8090b0"></path><path d="M5 2h6v4H5zM4 9h8v5H4z" fill="#fff"></path>`],
      ["분할", svg`<path d="M1.500 1.500h13v13h-13zM8.500 1.500v13M1.500 10.500h13" fill="#fff"></path><path d="M3 8l3-4M9 5l2 3 3-5" stroke="#c03030"></path>`],
      ["지표창", svg`<path d="M2.500 2.500h11v11h-11zM2.500 8.500h11" fill="#fff"></path><path d="M3 6l3-2 3 2 4-2M3 12l3-2 3 2 4-2" stroke="#c03030"></path>`],
      ["왼쪽", f("M2 8l5-4v3h6v2H7v3z")],
      ["로그", svg`<path d="M5 3v9h7" stroke="#102080" stroke-width="2"></path>`],
      ["오른쪽", f("M14 8L9 4v3H3v2h6v3z")],
      ["차트도구", svg`<path d="M2 2v12h12M3 13L13 3"></path><path d="M3 10l4-4 3 2" stroke="#d02020"></path><path d="M8 3h6v3h-2v6h-2V6H8z" fill="#70a0a0"></path>`],
    ];
    return html`<div class="scroll">
      ${["주", "현", "시", "황"].map((s) => html`<button class="cat">${s}</button>`)}
      <button class="step" aria-label="왼쪽으로">${tri("left", "#000", 3)}</button>
      <div class="track"><div class="thumb"></div></div>
      <button class="step" aria-label="오른쪽으로">${tri("right", "#000", 3)}</button>
      <input class="zoom" type="range" aria-label="확대 비율" value="18" />
      <div class="strip">${left.map(([n, b]) => html`<button aria-label=${n}>${svgIcon(b, 16, 16)}</button>`)}<span class="gap"></span>${right.map(([n, b]) => html`<button aria-label=${n}>${svgIcon(b, 16, 16)}</button>`)}</div>
    </div>`;
  }
}
